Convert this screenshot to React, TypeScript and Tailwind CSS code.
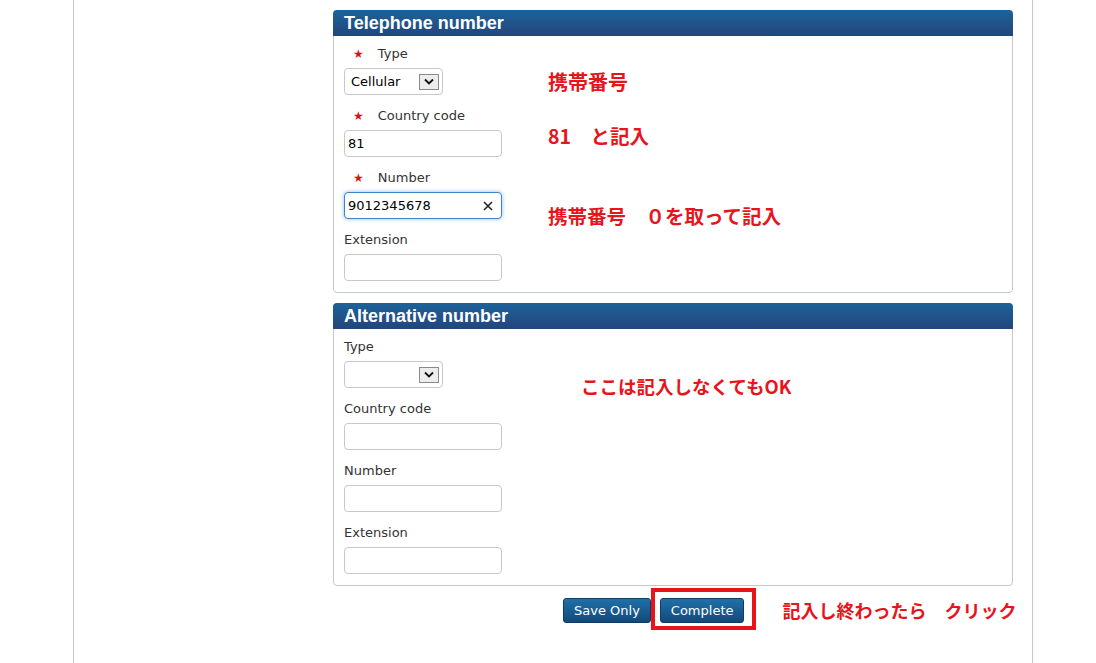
import React from 'react'

const font = { fontFamily: '"DejaVu Sans", Verdana, sans-serif' }
const jp = { fontFamily: '"Noto Sans CJK JP", sans-serif' }

function Label({ text, required }: { text: string; required?: boolean }) {
  return (
    <div className="h-[18px] flex items-center text-[13px] leading-[18px] text-[#333] mb-[5px]">
      {required && <span className="text-[#d9141b] text-[12px] ml-[9px] mr-[14px]">★</span>}
      <span>{text}</span>
    </div>
  )
}

function Chevron() {
  return (
    <span className="w-[20px] h-[16px] border border-[#8a8a8a] bg-[#ededed] flex items-center justify-center">
      <svg width="10" height="7" viewBox="0 0 10 7">
        <path d="M1 1.5 L5 5.5 L9 1.5" fill="none" stroke="#111" strokeWidth="1.8" />
      </svg>
    </span>
  )
}

function Select({ value }: { value?: string }) {
  return (
    <div className="w-[99px] h-[27px] border border-[#c8c8c8] rounded-[4px] bg-white flex items-center justify-between pl-[6px] pr-[3px] text-[13px] text-black">
      <span>{value ?? ''}</span>
      <Chevron />
    </div>
  )
}

function Input({ value, focused }: { value?: string; focused?: boolean }) {
  return (
    <div
      className={
        focused
          ? 'w-[158px] h-[27px] border border-[#3a84c8] rounded-[4px] bg-white flex items-center justify-between pl-[3px] pr-[8px] text-[13px] text-black shadow-[0_0_4px_rgba(60,130,200,0.55)]'
          : 'w-[158px] h-[27px] border border-[#c8c8c8] rounded-[4px] bg-white flex items-center pl-[3px] text-[13px] text-black'
      }
    >
      <span>{value ?? ''}</span>
      {focused && (
        <svg width="10" height="10" viewBox="0 0 10 10">
          <path d="M1 1 L9 9 M9 1 L1 9" stroke="#222" strokeWidth="1.6" />
        </svg>
      )}
    </div>
  )
}

function Field({ label, required, children, last }: { label: string; required?: boolean; children: React.ReactNode; last?: boolean }) {
  return (
    <div className={last ? '' : 'mb-[12px]'}>
      <Label text={label} required={required} />
      {children}
    </div>
  )
}

function Panel({ title, children }: { title: string; children: React.ReactNode }) {
  return (
    <div className="relative border border-[#c8c8c8] rounded-[4px] bg-white">
      <div
        className="h-[26px] -mx-px -mt-px rounded-t-[4px] bg-gradient-to-b from-[#1b6399] to-[#22457d] text-white font-bold text-[18px] leading-[26px] px-[11px]"
        style={{ fontFamily: '"Liberation Sans", Arial, sans-serif' }}
      >
        {title}
      </div>
      <div className="pt-[9px] pb-[11px] px-[10px]">{children}</div>
    </div>
  )
}

function Note({ children, className }: { children: React.ReactNode; className: string }) {
  return (
    <div className={'absolute text-[#e8141c] font-bold leading-[24px] whitespace-pre ' + className} style={jp}>
      {children}
    </div>
  )
}

export default function App() {
  return (
    <div className="w-[1096px] h-[663px] bg-white overflow-hidden" style={font}>
      <div className="ml-[73px] w-[960px] h-full border-x border-[#c8c8c8] pl-[259px] pr-[19px] pt-[10px]">
        <Panel title="Telephone number">
          <Field label="Type" required>
            <Select value="Cellular" />
          </Field>
          <Field label="Country code" required>
            <Input value="81" />
          </Field>
          <Field label="Number" required>
            <Input value="9012345678" focused />
          </Field>
          <Field label="Extension" last>
            <Input />
          </Field>
          <Note className="left-[214px] top-[59px] text-[20px]">携帯番号</Note>
          <Note className="left-[214px] top-[113px] text-[19.5px]">81　と記入</Note>
          <Note className="left-[214px] top-[193px] text-[19.5px]">携帯番号　０を取って記入</Note>
        </Panel>

        <div className="h-[10px]" />

        <Panel title="Alternative number">
          <Field label="Type">
            <Select />
          </Field>
          <Field label="Country code">
            <Input />
          </Field>
          <Field label="Number">
            <Input />
          </Field>
          <Field label="Extension" last>
            <Input />
          </Field>
          <Note className="left-[247px] top-[70px] text-[18.5px]">ここは記入しなくてもOK</Note>
        </Panel>

        <div className="flex items-center pl-[230px] mt-[11px] gap-[9px]">
          <button className="h-[25px] px-[10px] whitespace-nowrap rounded-[3px] border border-[#0e3c66] bg-gradient-to-b from-[#2071a8] to-[#13497a] text-white text-[13px]">
            Save Only
          </button>
          <span className="relative">
            <button className="h-[25px] px-[10px] whitespace-nowrap rounded-[3px] border border-[#0e3c66] bg-gradient-to-b from-[#2071a8] to-[#13497a] text-white text-[13px]">
              Complete
            </button>
            <span className="absolute -left-[9px] -right-[12px] -top-[10px] -bottom-[7px] border-4 border-[#e8141c]" />
          </span>
          <span className="ml-[29px] text-[#e8141c] font-bold text-[18px] whitespace-pre" style={jp}>
            記入し終わったら　クリック
          </span>
        </div>
      </div>
    </div>
  )
}
